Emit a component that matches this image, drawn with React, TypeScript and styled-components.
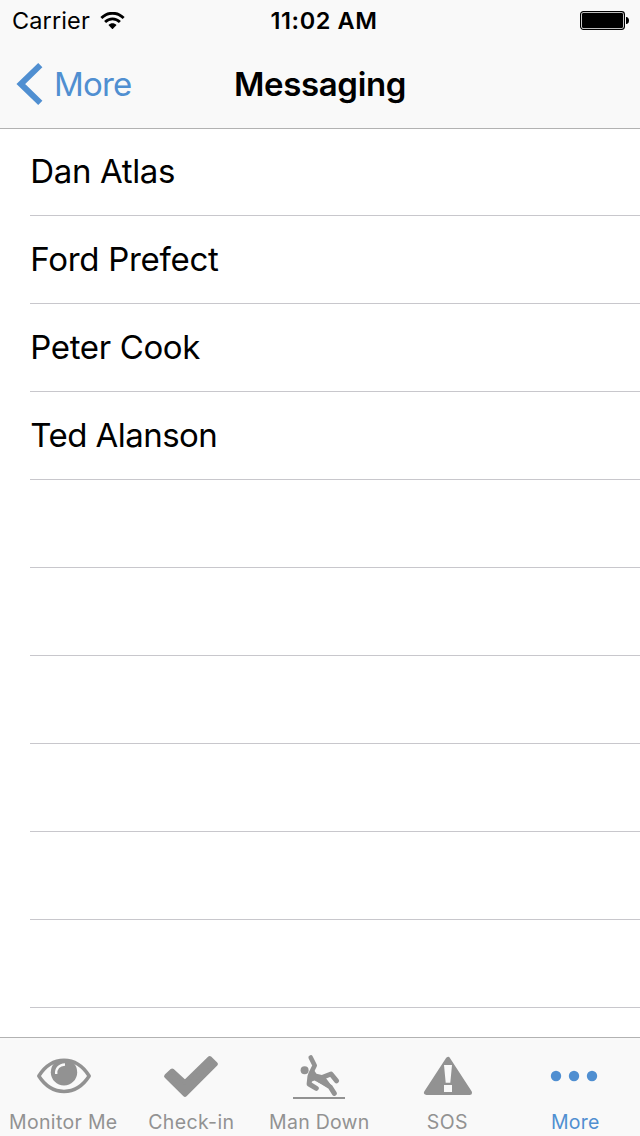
import React from "react";
import styled, { createGlobalStyle } from "styled-components";

const GlobalStyle = createGlobalStyle`
  * { box-sizing: border-box; }
  body { margin: 0; background: #fff; font-family: Inter, "Liberation Sans", sans-serif; color: #000; }
  svg { display: block; }
`;

const BLUE = "#508fd1";
const GRAY = "#929292";

const Screen = styled.div`
  width: 640px;
  height: 1136px;
  display: flex;
  flex-direction: column;
  overflow: hidden;
  background: #fff;
`;

const Header = styled.header`
  height: 129px;
  flex: none;
  background: #f9f9f9;
  border-bottom: 1px solid #b2b2b2;
`;

const Bar = styled.div<{ $height: number }>`
  height: ${(p) => p.$height}px;
  display: grid;
  grid-template-columns: 1fr auto 1fr;
  align-items: center;
`;

const StatusBar = styled(Bar)`
  align-items: start;
  padding-top: 7px;
`;

const Left = styled.div`
  display: flex;
  align-items: center;
`;

const Battery = styled.div`
  display: flex;
  justify-content: flex-end;
  padding-top: 4px;
`;

const Label = styled.span<{ $size: number; $spacing?: number; $weight?: number; $color?: string }>`
  font-size: ${(p) => p.$size}px;
  line-height: 1.2;
  letter-spacing: ${(p) => p.$spacing ?? 0}px;
  font-weight: ${(p) => p.$weight ?? 400};
  color: ${(p) => p.$color ?? "#000"};
  white-space: nowrap;
`;

const Clock = styled(Label)`
  padding-left: 8px;
`;

const TabLabel = styled(Label)`
  padding-right: 1.4px;
`;

const Carrier = styled.div`
  display: flex;
  align-items: flex-start;
  padding-left: 12px;
  gap: 10px;

  svg { margin-top: 4.5px; }
`;

const Back = styled(Left)`
  padding-left: 16px;
  gap: 11px;

  svg { margin-bottom: 2px; }
`;

const List = styled.ul`
  flex: 1;
  min-height: 0;
  overflow: hidden;
  margin: 0;
  padding: 0 0 0 30px;
  list-style: none;
`;

const Row = styled.li<{ $first?: boolean }>`
  height: ${(p) => (p.$first ? 87 : 88)}px;
  display: flex;
  align-items: center;
  padding-left: 0.3px;
  border-bottom: 1px solid #c8c7cc;
`;

const TabBar = styled.nav`
  height: 99px;
  flex: none;
  display: grid;
  grid-template-columns: repeat(5, 128px);
  background: #f9f9f9;
  border-top: 1px solid #b2b2b2;
`;

const Tab = styled.div`
  display: flex;
  flex-direction: column;
  align-items: center;
  gap: 11px;
`;

const TabIcon = ({ children }: { children: React.ReactNode }) => (
  <svg width="128" height="62" viewBox="0 0 128 62">{children}</svg>
);

const people = [
  { name: "Dan Atlas", spacing: -0.36 },
  { name: "Ford Prefect", spacing: -0.28 },
  { name: "Peter Cook", spacing: -0.36 },
  { name: "Ted Alanson", spacing: -0.54 },
  ...Array.from({ length: 6 }, () => ({ name: "", spacing: 0 })),
];

const tabs = [
  {
    label: "Monitor Me",
    spacing: 0.32,
    color: GRAY,
    icon: (
      <>
        <path d="M38.8 38C52 17 76 17 89.200 38C76 58.500 52 58.500 38.800 38Z" fill="none" stroke={GRAY} strokeWidth="3.500" strokeLinejoin="round" />
        <circle cx="64" cy="34.200" r="13.200" fill={GRAY} />
        <path d="M56.200 36C55.800 30.500 59 26.800 65 26.500" fill="none" stroke="#f9f9f9" strokeWidth="2.400" />
      </>
    ),
  },
  {
    label: "Check-in",
    spacing: 0.35,
    color: GRAY,
    icon: <path d="M38.300 38.200L44.200 32.700L57 44.300L81.600 20.200L87.700 26L57 56.600Z" fill={GRAY} stroke={GRAY} strokeWidth="4.400" strokeLinejoin="round" />,
  },
  {
    label: "Man Down",
    spacing: 0.25,
    color: GRAY,
    icon: (
      <>
        <circle cx="48.600" cy="32.300" r="4" fill={GRAY} />
        <g fill="none" stroke={GRAY} strokeWidth="5" strokeLinecap="round" strokeLinejoin="round">
          <path d="M54.700 19.500L58.700 27.500L54.500 36" strokeWidth="4.600" />
          <path d="M54 38L53.100 46L60.300 50.300" />
          <path d="M66 39.500L75 36L80.600 42.800" />
          <path d="M64 42.500L74.300 49L78.300 55.300" />
        </g>
        <path d="M53 36L57.500 31.500L60.500 35.700L68 37.500L75 47L72 49.500L58.500 42.500L54.500 44Z" fill={GRAY} />
        <path d="M37 60H89" stroke={GRAY} strokeWidth="1.900" />
      </>
    ),
  },
  {
    label: "SOS",
    spacing: 0.4,
    color: GRAY,
    icon: (
      <>
        <path d="M64 21.500L42.500 54.500H85.500Z" fill={GRAY} stroke={GRAY} strokeWidth="5" strokeLinejoin="round" />
        <path d="M60 27H68L66.300 44.700H61.700ZM60 47H68V54H60Z" fill="#f9f9f9" />
      </>
    ),
  },
  {
    label: "More",
    spacing: 0.2,
    color: BLUE,
    icon: (
      <g fill={BLUE}>
        <circle cx="44" cy="38" r="5.200" />
        <circle cx="62" cy="38" r="5.200" />
        <circle cx="80" cy="38" r="5.200" />
      </g>
    ),
  },
];

export default function App() {
  return (
    <>
      <GlobalStyle />
      <Screen>
        <Header>
          <StatusBar $height={41}>
            <Carrier>
              <Label $size={23.5} $spacing={0.12}>Carrier</Label>
              <svg width="25" height="17.500" viewBox="0 0 26 18" preserveAspectRatio="none">
                <g fill="none" stroke="#000" strokeWidth="2.900">
                  <path d="M1.400 6.200C8 -0.400 18 -0.400 24.600 6.200" />
                  <path d="M5.300 10.300C9.700 6 16.300 6 20.700 10.300" />
                </g>
                <path d="M8.800 13.300C11.200 11 14.800 11 17.200 13.300L13 17.800Z" />
              </svg>
            </Carrier>
            <Clock $size={23.5} $spacing={0.6} $weight={600}>11:02 AM</Clock>
            <Battery>
              <svg width="60" height="20" viewBox="0 0 60 20">
                <rect x="0.600" y="0.600" width="43.800" height="17.800" rx="2.800" fill="#fff" stroke="#000" strokeWidth="1.200" />
                <rect x="2" y="2" width="41" height="15" rx="1.200" />
                <path d="M46 6H46.500C48.500 6.500 49 8 49 9.500S48.500 12.500 46.500 13H46Z" />
              </svg>
            </Battery>
          </StatusBar>
          <Bar $height={87}>
            <Back>
              <svg width="27" height="42" viewBox="0 0 27 42">
                <path d="M24.300 2.200L4.800 21L24.300 39.800" fill="none" stroke={BLUE} strokeWidth="6" />
              </svg>
              <Label $size={33} $spacing={-0.8} $color={BLUE}>More</Label>
            </Back>
            <Label $size={33} $spacing={-0.35} $weight={600}>Messaging</Label>
            <span />
          </Bar>
        </Header>
        <List>
          {people.map((p, i) => (
            <Row key={i} $first={i === 0}>
              <Label $size={33} $spacing={p.spacing}>{p.name}</Label>
            </Row>
          ))}
        </List>
        <TabBar>
          {tabs.map((t) => (
            <Tab key={t.label}>
              <TabIcon>{t.icon}</TabIcon>
              <TabLabel $size={19.5} $spacing={t.spacing} $color={t.color}>{t.label}</TabLabel>
            </Tab>
          ))}
        </TabBar>
      </Screen>
    </>
  );
}
